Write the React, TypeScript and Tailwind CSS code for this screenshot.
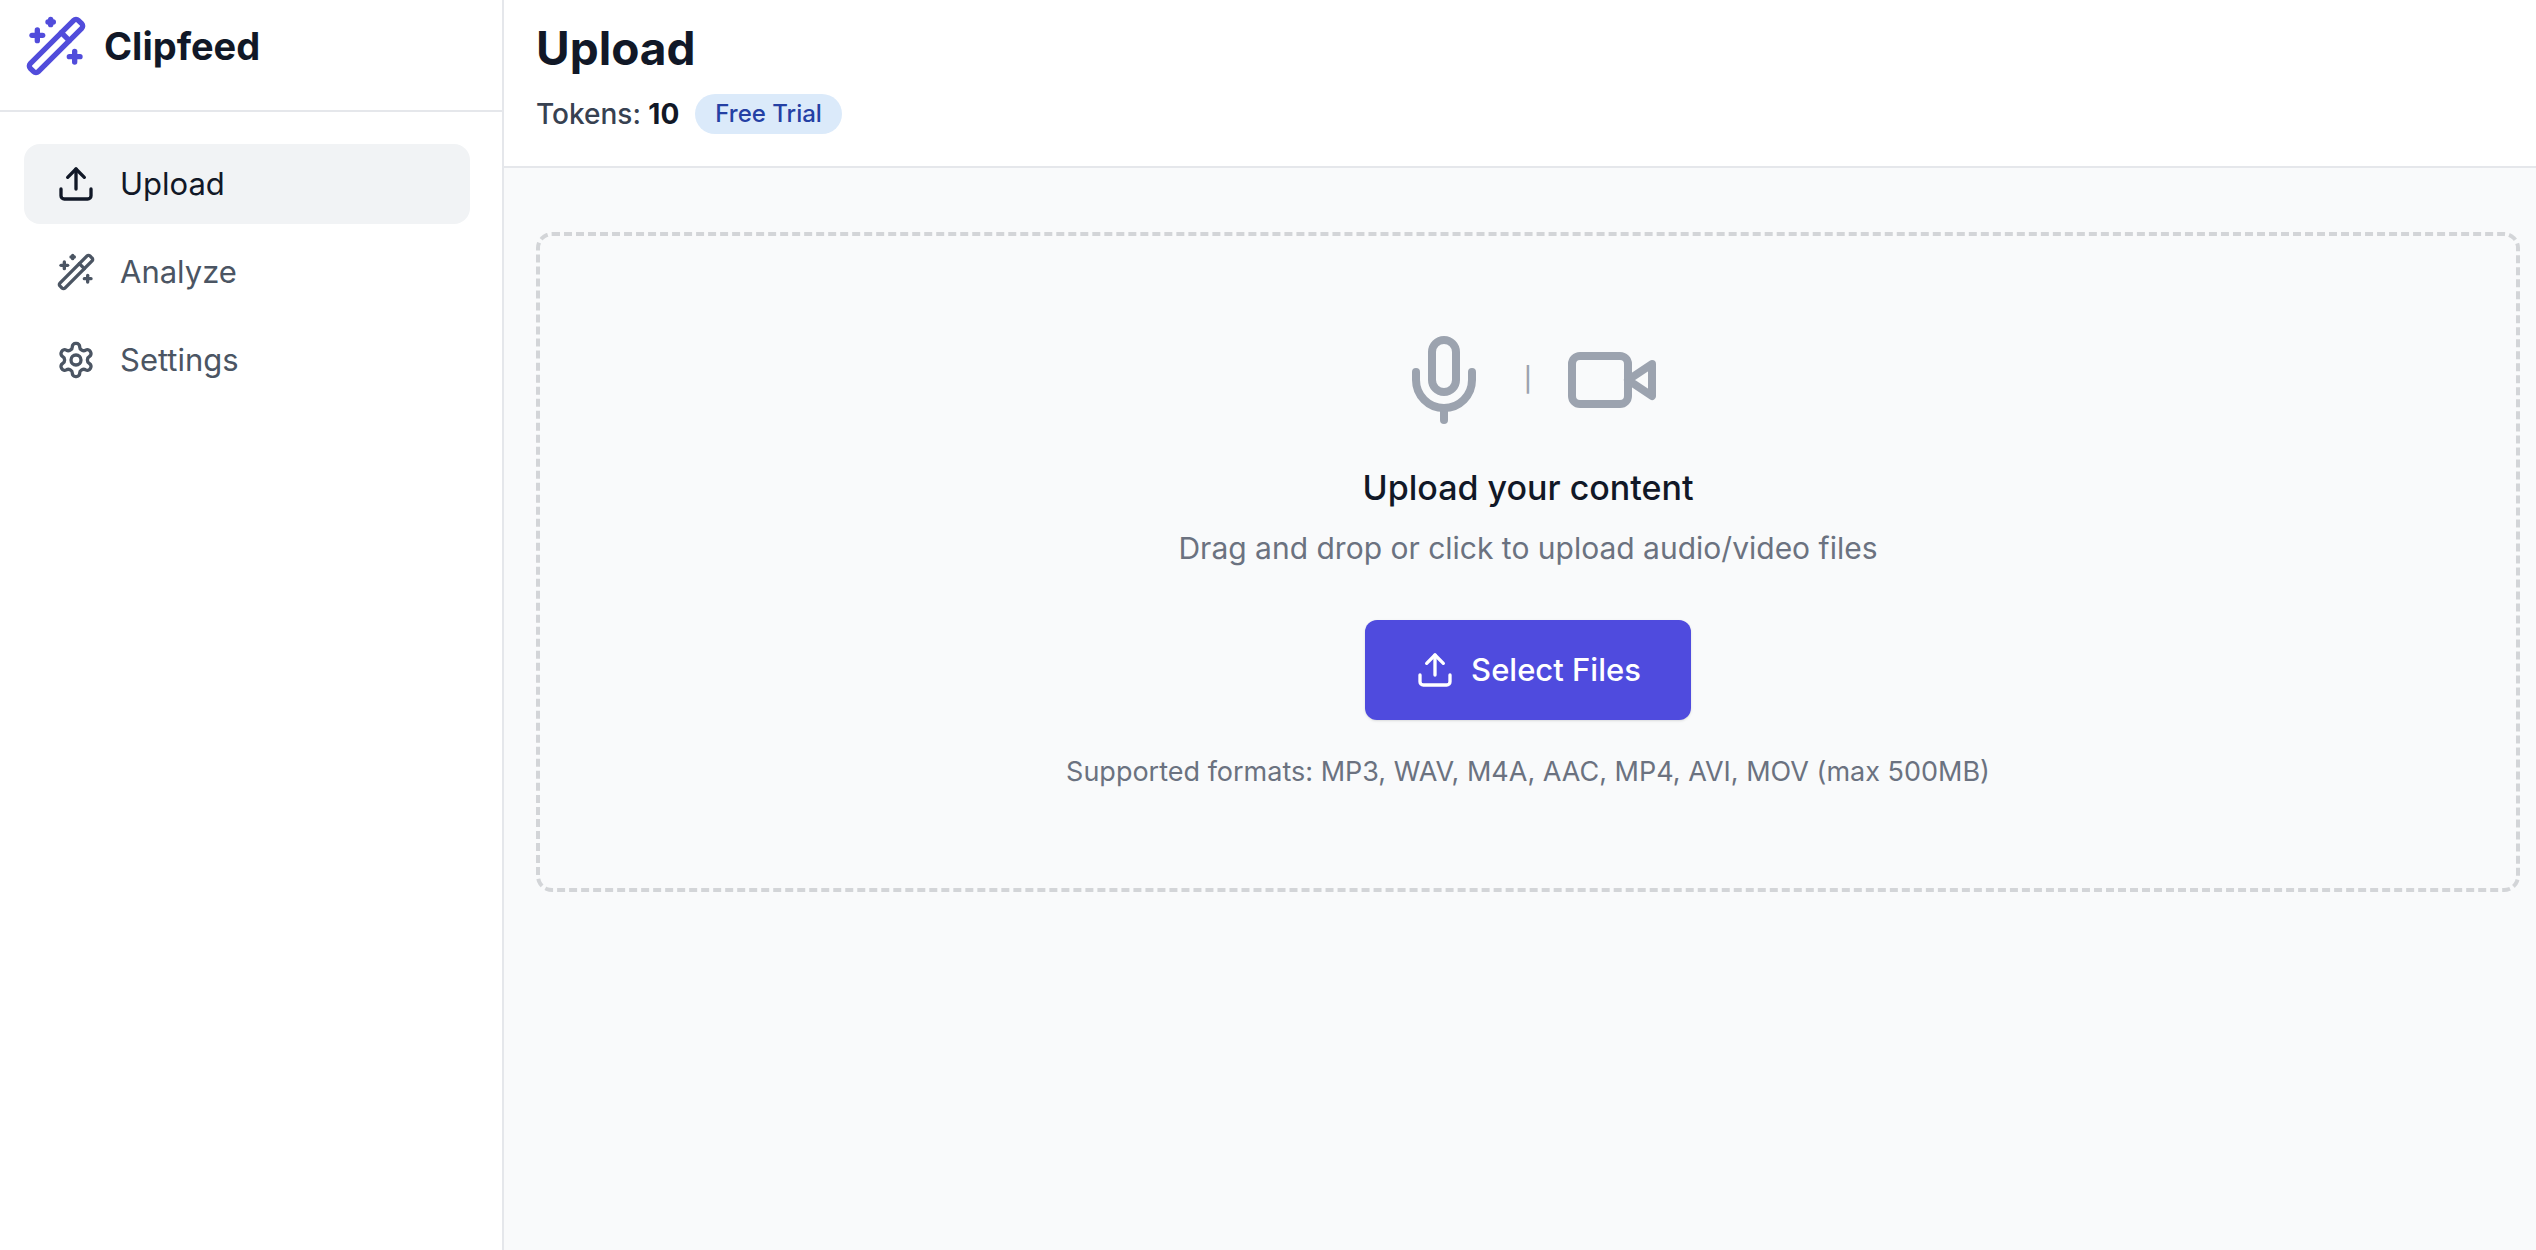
import { Mic, Upload, WandSparkles } from 'lucide-react'

interface IconProps {
  className?: string
}

function VideoIcon({ className }: IconProps) {
  return (
    <svg
      viewBox="0 0 24 24"
      fill="none"
      stroke="currentColor"
      strokeWidth="2"
      strokeLinecap="round"
      strokeLinejoin="round"
      className={className}
      aria-hidden="true"
    >
      <path d="m22 8-6 4 6 4V8Z" />
      <rect width="14" height="12" x="2" y="6" rx="2" ry="2" />
    </svg>
  )
}

function GearIcon({ className }: IconProps) {
  return (
    <svg
      viewBox="0 0 24 24"
      fill="none"
      stroke="currentColor"
      strokeWidth="2"
      strokeLinecap="round"
      strokeLinejoin="round"
      className={className}
      aria-hidden="true"
    >
      <path d="M12.22 2h-.44a2 2 0 0 0-2 2v.18a2 2 0 0 1-1 1.73l-.43.25a2 2 0 0 1-2 0l-.15-.08a2 2 0 0 0-2.73.73l-.22.38a2 2 0 0 0 .73 2.73l.15.1a2 2 0 0 1 1 1.72v.51a2 2 0 0 1-1 1.74l-.15.09a2 2 0 0 0-.73 2.73l.22.38a2 2 0 0 0 2.73.73l.15-.08a2 2 0 0 1 2 0l.43.25a2 2 0 0 1 1 1.73V20a2 2 0 0 0 2 2h.44a2 2 0 0 0 2-2v-.18a2 2 0 0 1 1-1.73l.43-.25a2 2 0 0 1 2 0l.15.08a2 2 0 0 0 2.73-.73l.22-.39a2 2 0 0 0-.73-2.73l-.15-.08a2 2 0 0 1-1-1.74v-.5a2 2 0 0 1 1-1.74l.15-.09a2 2 0 0 0 .73-2.73l-.22-.38a2 2 0 0 0-2.73-.73l-.15.08a2 2 0 0 1-2 0l-.43-.25a2 2 0 0 1-1-1.73V4a2 2 0 0 0-2-2z" />
      <circle cx="12" cy="12" r="3" />
    </svg>
  )
}

const NAV_ITEMS = [
  { label: 'Upload', icon: Upload, active: true },
  { label: 'Analyze', icon: WandSparkles, active: false },
  { label: 'Settings', icon: GearIcon, active: false },
]

function Sidebar() {
  return (
    <aside className="w-[504px] shrink-0 bg-white border-r-2 border-[#e5e7eb]">
      <div className="flex items-center gap-4 px-6 pt-3.5 pb-8 border-b-2 border-[#e5e7eb]">
        <WandSparkles className="size-16 text-[#514cdb]" />
        <span className="text-[38px] leading-[64px] font-bold text-[#111827]">Clipfeed</span>
      </div>

      <nav className="flex flex-col gap-2 pt-8 pl-6 pr-8">
        {NAV_ITEMS.map(({ label, icon: Icon, active }) => (
          <a
            key={label}
            href="#"
            aria-current={active ? 'page' : undefined}
            className={`flex h-20 items-center gap-6 rounded-2xl px-8 text-[31px] leading-[48px] ${
              active ? 'bg-[#f1f3f5] text-[#111827]' : 'text-[#4b5563]'
            }`}
          >
            <Icon className="size-10" />
            {label}
          </a>
        ))}
      </nav>
    </aside>
  )
}

function Header() {
  return (
    <header className="bg-white border-b-2 border-[#e5e7eb] px-8 pt-4 pb-8">
      <h1 className="text-[46px] leading-[64px] font-bold text-[#111827]">Upload</h1>
      <div className="mt-3.5 flex items-center gap-4">
        <p className="text-[28px] leading-[40px] font-medium text-[#374151]">
          Tokens: <span className="font-bold text-[#111827]">10</span>
        </p>
        <span className="rounded-full bg-[#dbeafa] px-5 text-[24px] leading-[40px] font-medium text-[#2440a4]">
          Free Trial
        </span>
      </div>
    </header>
  )
}

function DropZone() {
  return (
    <section className="flex flex-col items-center rounded-2xl border-4 border-dashed border-[#d3d5d8] px-8 py-24 text-center">
      {/* accepted media kinds */}
      <div className="flex items-center gap-8 text-[#9ca3af]">
        <Mic className="size-24" />
        <span className="flex w-2 justify-center text-[24px] leading-[48px] font-medium">|</span>
        <VideoIcon className="size-24" />
      </div>

      <h2 className="mt-8 text-[34px] leading-[56px] font-medium text-[#111827]">Upload your content</h2>
      <p className="mt-2 text-[30px] leading-[48px] text-[#6b7280]">
        Drag and drop or click to upload audio/video files
      </p>

      <button
        type="button"
        className="mt-12 flex h-[100px] items-center gap-4 rounded-xl bg-[#4f4bde] px-[50px] text-[31px] leading-[48px] font-medium text-white shadow-sm"
      >
        <Upload className="size-10" />
        Select Files
      </button>

      <p className="mt-8 text-[27px] leading-[40px] text-[#6b7280]">
        Supported formats: MP3, WAV, M4A, AAC, MP4, AVI, MOV (max 500MB)
      </p>
    </section>
  )
}

export default function App() {
  return (
    <div className="flex min-h-screen bg-[#f9fafb] font-['Inter',sans-serif]">
      <Sidebar />
      <div className="min-w-0 flex-1">
        <Header />
        <main className="pt-16 pl-8 pr-4 pb-16">
          <DropZone />
        </main>
      </div>
    </div>
  )
}
